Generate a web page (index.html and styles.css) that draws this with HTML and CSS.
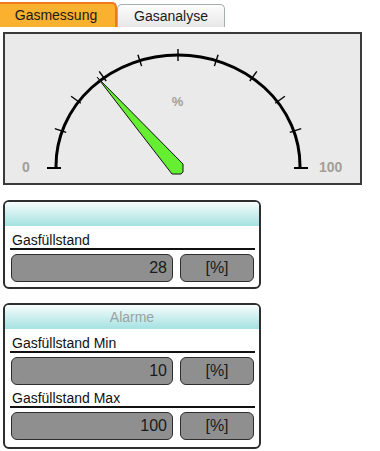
FILE: index.html
```html
<!DOCTYPE html>
<html lang="de">
<head>
<meta charset="utf-8">
<title>Gasmessung</title>
<link rel="stylesheet" href="styles.css">
</head>
<body>
<div class="tabs">
  <div class="tab tab-active">Gasmessung</div>
  <div class="tab">Gasanalyse</div>
</div>

<div class="gauge-panel">
  <svg class="gauge" width="355" height="149" viewBox="5 34 355 149" xmlns="http://www.w3.org/2000/svg">
    <path d="M56 168 L56 166 A122 111 0 0 1 300 166 L300 168" fill="none" stroke="#000" stroke-width="3"/>
    <g stroke="#000" stroke-width="1.4">
      <line x1="47" y1="168" x2="61" y2="168" stroke-width="2"/>
      <line x1="294" y1="168" x2="308" y2="168" stroke-width="2"/>
      <line x1="66.2" y1="132.4" x2="54.8" y2="128.7"/>
      <line x1="80.8" y1="103.3" x2="71.1" y2="96.3"/>
      <line x1="106.2" y1="81.0" x2="99.2" y2="71.3"/>
      <line x1="141.6" y1="66.1" x2="137.9" y2="54.7"/>
      <line x1="178" y1="61" x2="178" y2="49"/>
      <line x1="214.4" y1="66.1" x2="218.1" y2="54.7"/>
      <line x1="249.8" y1="81.0" x2="256.8" y2="71.3"/>
      <line x1="275.2" y1="103.3" x2="284.9" y2="96.3"/>
      <line x1="289.8" y1="132.4" x2="301.2" y2="128.7"/>
    </g>
    <text class="g-label" x="22" y="172">0</text>
    <text class="g-label" x="319" y="172">100</text>
    <text class="g-unit" x="177.5" y="106" text-anchor="middle">%</text>
    <polygon points="97,77 183,164 183,172 181,174 172,174" fill="#66ee33" stroke="#111" stroke-width="1" stroke-linejoin="round"/>
  </svg>
</div>

<div class="panel panel-first">
  <div class="panel-head"></div>
  <div class="panel-body">
    <div class="field-label first">Gasfüllstand</div>
    <div class="field-row">
      <div class="box value">28</div>
      <div class="box unit">[%]</div>
    </div>
  </div>
</div>

<div class="panel panel-second">
  <div class="panel-head">Alarme</div>
  <div class="panel-body">
    <div class="field-label first">Gasfüllstand Min</div>
    <div class="field-row">
      <div class="box value">10</div>
      <div class="box unit">[%]</div>
    </div>
    <div class="field-label">Gasfüllstand Max</div>
    <div class="field-row">
      <div class="box value">100</div>
      <div class="box unit">[%]</div>
    </div>
  </div>
</div>
</body>
</html>
```

FILE: styles.css
```css
* {
  box-sizing: border-box;
}

body {
  margin: 0;
  background: #ffffff;
  font-family: "Liberation Sans", Arial, sans-serif;
  color: #1a1a1a;
  width: 380px;
  height: 451px;
  overflow: hidden;
}

.tabs {
  display: flex;
  align-items: flex-end;
  height: 27px;
}

.tab {
  width: 108px;
  height: 23px;
  border: 1px solid #a6adad;
  border-bottom: none;
  border-radius: 5px 5px 0 0;
  background: linear-gradient(#fdfdfd, #e6e7e6);
  font-size: 14px;
  line-height: 22px;
  text-align: center;
}

.tab-active {
  width: 117px;
  height: 25px;
  border: none;
  border-top: 2px solid #ef7a1c;
  border-right: 2px solid #ef7a1c;
  border-radius: 0 5px 0 0;
  background: #f9b12f;
  line-height: 23px;
  padding-right: 3px;
}

.gauge-panel {
  margin: 5px 0 0 3px;
  width: 359px;
  height: 153px;
  border: 2px solid #3a3a3a;
  background: #e9eae9;
}

.gauge {
  display: block;
}

.g-label {
  font-family: "Liberation Sans", Arial, sans-serif;
  font-size: 14px;
  font-weight: bold;
  fill: #a59e95;
}

.g-unit {
  font-family: "Liberation Sans", Arial, sans-serif;
  font-size: 13px;
  font-weight: bold;
  fill: #a59e95;
}

.panel {
  margin-left: 3px;
  width: 258px;
  border: 2px solid #2e2e2e;
  border-radius: 6px;
  overflow: hidden;
  background: #ffffff;
}

.panel-first {
  margin-top: 15px;
}

.panel-second {
  margin-top: 14px;
}

.panel-head {
  height: 24px;
  background: linear-gradient(#f6fcfc, #a4e2e1);
  color: #9aa3a3;
  font-size: 14px;
  line-height: 24px;
  text-align: center;
}

.panel-body {
  padding: 0 4px 5px 5px;
}

.panel-second .panel-body {
  padding-bottom: 7px;
}

.field-label {
  margin-top: 5px;
  padding-left: 2px;
  font-size: 14px;
  line-height: 16px;
  color: #111;
  border-bottom: 2px solid #111;
}

.field-label.first {
  margin-top: 6px;
}

.field-row {
  display: flex;
  gap: 7px;
  margin-top: 4px;
  margin-left: 1px;
}

.box {
  height: 28px;
  border: 1px solid #2e2e2e;
  border-radius: 6px;
  background: #8f8f8f;
  font-size: 16px;
  line-height: 26px;
  color: #1a1a1a;
}

.value {
  width: 162px;
  text-align: right;
  padding-right: 5px;
}

.unit {
  width: 74px;
  text-align: center;
}
```
